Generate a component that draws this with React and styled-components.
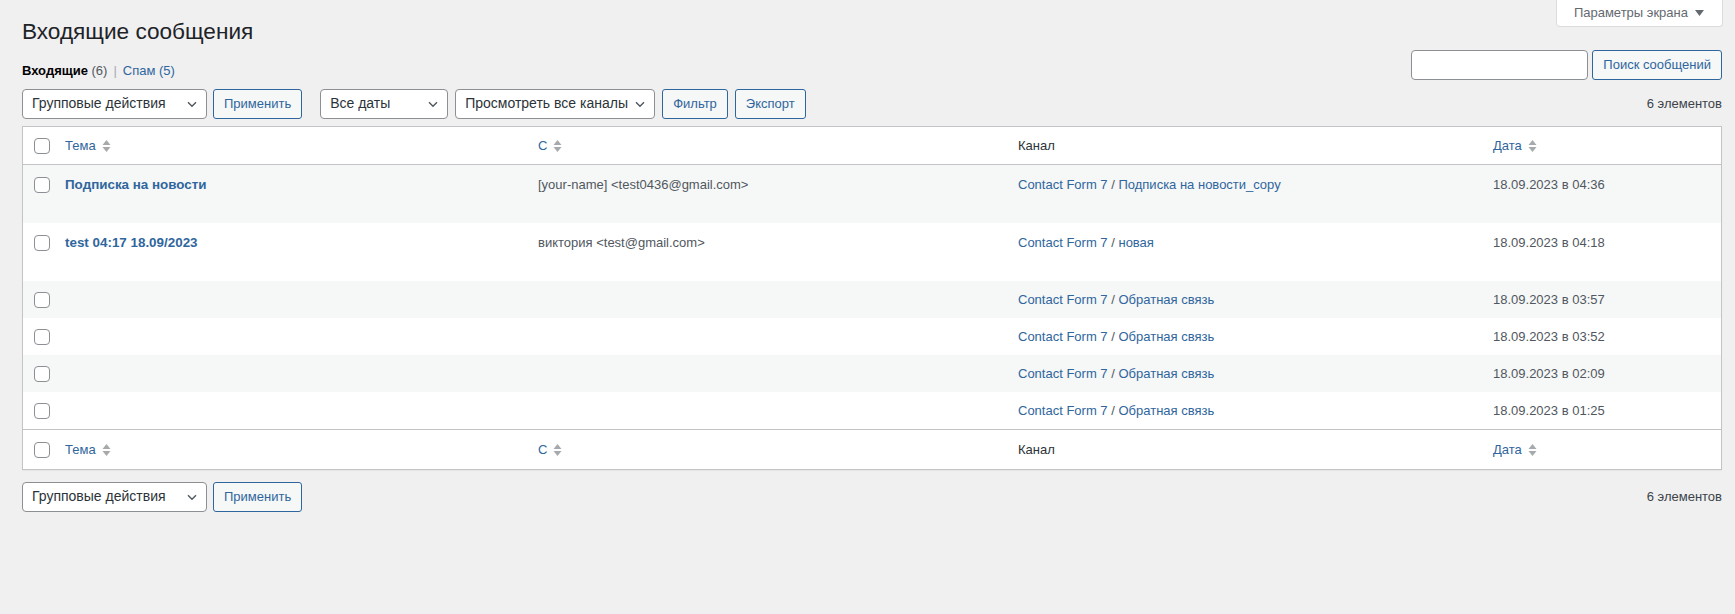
import React from "react";
import styled, { createGlobalStyle } from "styled-components";

const LINK = "#2f669d";
const TEXT = "#3c434a";
const CELL = "#50575e";
const BORDER = "#c3c4c7";
const COLS = "32px 473fr 480fr 475fr 238fr";

const GlobalStyle = createGlobalStyle`
  html, body { margin: 0; padding: 0; background: #f0f0f1; }
  body {
    font-family: "Liberation Sans", Arial, sans-serif;
    font-size: 13px;
    line-height: 1.4;
    color: ${TEXT};
  }
  * { box-sizing: border-box; }
`;

const Page = styled.div`
  padding: 0 13px 40px 22px;
`;

const Header = styled.div`
  display: flex;
  justify-content: space-between;
  align-items: flex-start;
  height: 47px;
`;

const Title = styled.h1`
  margin: 0;
  padding-top: 17px;
  font-size: 22.6px;
  font-weight: 400;
  line-height: 30px;
  color: #1d2327;
`;

const ScreenOptions = styled.button`
  display: flex;
  align-items: center;
  gap: 7px;
  height: 27px;
  margin-right: -1px;
  padding: 0 18px 0 17px;
  background: #fff;
  border: 1px solid #dcdcde;
  border-top: 0;
  border-radius: 0 0 4px 4px;
  font: inherit;
  font-size: 13px;
  color: #646970;
`;

const SearchRow = styled.div`
  display: flex;
  justify-content: space-between;
  align-items: flex-end;
  margin-top: 3px;
  height: 30px;
`;

const Views = styled.div`
  line-height: 18px;
  font-size: 13px;
  color: #50575e;
`;

const Current = styled.span`
  font-weight: 700;
  color: #000;
`;

const Sep = styled.span`
  margin: 0 6px;
  color: #a7aaad;
`;

const Link = styled.a`
  color: ${LINK};
  text-decoration: none;
  font-weight: ${(p) => (p.$strong ? 700 : 400)};
  font-size: ${(p) => (p.$strong ? "13.4px" : "13px")};
`;

const SearchBox = styled.div`
  display: flex;
  gap: 4px;
`;

const SearchInput = styled.input`
  width: 177px;
  height: 30px;
  border: 1px solid #8c8f94;
  border-radius: 4px;
  background: #fff;
`;

const Button = styled.button`
  height: 30px;
  padding: 0 ${(p) => p.$pad || 10}px;
  border: 1px solid ${LINK};
  border-radius: 3px;
  background: #f6f7f7;
  color: ${LINK};
  font: inherit;
  font-size: 13px;
  white-space: nowrap;
`;

const TableNav = styled.div`
  display: flex;
  align-items: center;
  height: 30px;
  margin-top: ${(p) => p.$top}px;
`;

const Actions = styled.div`
  display: flex;
  align-items: center;
  gap: ${(p) => p.$gap}px;
  margin-right: ${(p) => p.$after || 0}px;
`;

const SelectBox = styled.div`
  display: flex;
  align-items: center;
  justify-content: space-between;
  width: ${(p) => p.$w}px;
  height: 30px;
  padding: 0 9px 0 9px;
  background: #fff;
  border: 1px solid #8c8f94;
  border-radius: 4px;
  font-size: 14px;
  color: #2c3338;
  white-space: nowrap;
`;

const Count = styled.div`
  margin-left: auto;
  font-size: 13px;
  color: ${TEXT};
`;

const Table = styled.div`
  margin-top: 7px;
  background: #fff;
  border: 1px solid ${BORDER};
  box-shadow: 0 1px 1px rgba(0, 0, 0, 0.04);
`;

const Row = styled.div`
  display: grid;
  grid-template-columns: ${COLS};
  height: ${(p) => p.$h}px;
  align-items: ${(p) => (p.$tall ? "start" : "center")};
  background: ${(p) => (p.$alt ? "#f6f7f7" : "#fff")};
  border-top: ${(p) => (p.$foot ? `1px solid ${BORDER}` : "0")};
  border-bottom: ${(p) => (p.$head ? `1px solid ${BORDER}` : "0")};
`;

const CheckCell = styled.div`
  display: flex;
  padding-left: 11px;
  padding-top: ${(p) => (p.$tall ? 12 : 0)}px;
`;

const Cell = styled.div`
  padding: ${(p) => (p.$tall ? "10px" : "0")} 10px 0;
  line-height: 20px;
  font-size: 13px;
  color: ${(p) => (p.$dark ? "#2c3338" : CELL)};
  white-space: nowrap;
`;

const Check = styled.span`
  display: block;
  width: 16px;
  height: 16px;
  border: 1px solid #8c8f94;
  border-radius: 4px;
  background: #fff;
`;

const SortLink = styled.a`
  display: inline-flex;
  align-items: center;
  gap: 6px;
  color: ${LINK};
  text-decoration: none;
`;

const Chevron = () => (
  <svg width="10" height="7" viewBox="0 0 10 7" aria-hidden="true">
    <path d="M1 1.2 L5 5.2 L9 1.2" fill="none" stroke="#50575e" strokeWidth="1.4" />
  </svg>
);

const SortIcon = () => (
  <svg width="9" height="16" viewBox="0 0 9 16" aria-hidden="true">
    <path d="M0.5 7 L4.5 2 L8.5 7 Z" fill="#a7aaad" />
    <path d="M0.5 9 L8.5 9 L4.5 14 Z" fill="#a7aaad" />
  </svg>
);

const Select = ({ w, children }) => (
  <SelectBox $w={w}>
    <span>{children}</span>
    <Chevron />
  </SelectBox>
);

const Sortable = ({ children }) => (
  <SortLink href="#">
    {children}
    <SortIcon />
  </SortLink>
);

const HeadRow = ({ foot }) => (
  <Row $h={foot ? 40 : 38} $head={!foot} $foot={foot}>
    <CheckCell>
      <Check />
    </CheckCell>
    <Cell>
      <Sortable>Тема</Sortable>
    </Cell>
    <Cell>
      <Sortable>С</Sortable>
    </Cell>
    <Cell $dark>Канал</Cell>
    <Cell>
      <Sortable>Дата</Sortable>
    </Cell>
  </Row>
);

const messages = [
  {
    subject: "Подписка на новости",
    from: "[your-name] <test0436@gmail.com>",
    channel: "Подписка на новости_copy",
    date: "18.09.2023 в 04:36",
  },
  {
    subject: "test 04:17 18.09/2023",
    from: "виктория <test@gmail.com>",
    channel: "новая",
    date: "18.09.2023 в 04:18",
  },
  { channel: "Обратная связь", date: "18.09.2023 в 03:57" },
  { channel: "Обратная связь", date: "18.09.2023 в 03:52" },
  { channel: "Обратная связь", date: "18.09.2023 в 02:09" },
  { channel: "Обратная связь", date: "18.09.2023 в 01:25" },
];

const BulkActions = ({ after }) => (
  <Actions $gap={6} $after={after}>
    <Select w={185}>Групповые действия</Select>
    <Button>Применить</Button>
  </Actions>
);

export default function App() {
  return (
    <>
      <GlobalStyle />
      <Page>
        <Header>
          <Title>Входящие сообщения</Title>
          <ScreenOptions>
            Параметры экрана
            <svg width="9" height="6" viewBox="0 0 9 6" aria-hidden="true">
              <path d="M0 0 L9 0 L4.5 6 Z" fill="#646970" />
            </svg>
          </ScreenOptions>
        </Header>

        <SearchRow>
          <Views>
            <Current>Входящие</Current> (6)
            <Sep>|</Sep>
            <Link href="#">Спам (5)</Link>
          </Views>
          <SearchBox>
            <SearchInput type="search" />
            <Button $pad={10}>Поиск сообщений</Button>
          </SearchBox>
        </SearchRow>

        <TableNav $top={9}>
          <BulkActions after={18} />
          <Actions $gap={7}>
            <Select w={128}>Все даты</Select>
            <Select w={200}>Просмотреть все каналы</Select>
            <Button>Фильтр</Button>
            <Button>Экспорт</Button>
          </Actions>
          <Count>6 элементов</Count>
        </TableNav>

        <Table>
          <HeadRow />
          {messages.map((m, i) => {
            const tall = Boolean(m.subject);
            return (
              <Row key={i} $h={tall ? 58 : 37} $tall={tall} $alt={i % 2 === 0}>
                <CheckCell $tall={tall}>
                  <Check />
                </CheckCell>
                <Cell $tall={tall}>
                  {m.subject && (
                    <Link href="#" $strong>
                      {m.subject}
                    </Link>
                  )}
                </Cell>
                <Cell $tall={tall}>{m.from}</Cell>
                <Cell $tall={tall}>
                  <Link href="#">Contact Form 7</Link> /{" "}
                  <Link href="#">{m.channel}</Link>
                </Cell>
                <Cell $tall={tall}>{m.date}</Cell>
              </Row>
            );
          })}
          <HeadRow foot />
        </Table>

        <TableNav $top={12}>
          <BulkActions />
          <Count>6 элементов</Count>
        </TableNav>
      </Page>
    </>
  );
}
